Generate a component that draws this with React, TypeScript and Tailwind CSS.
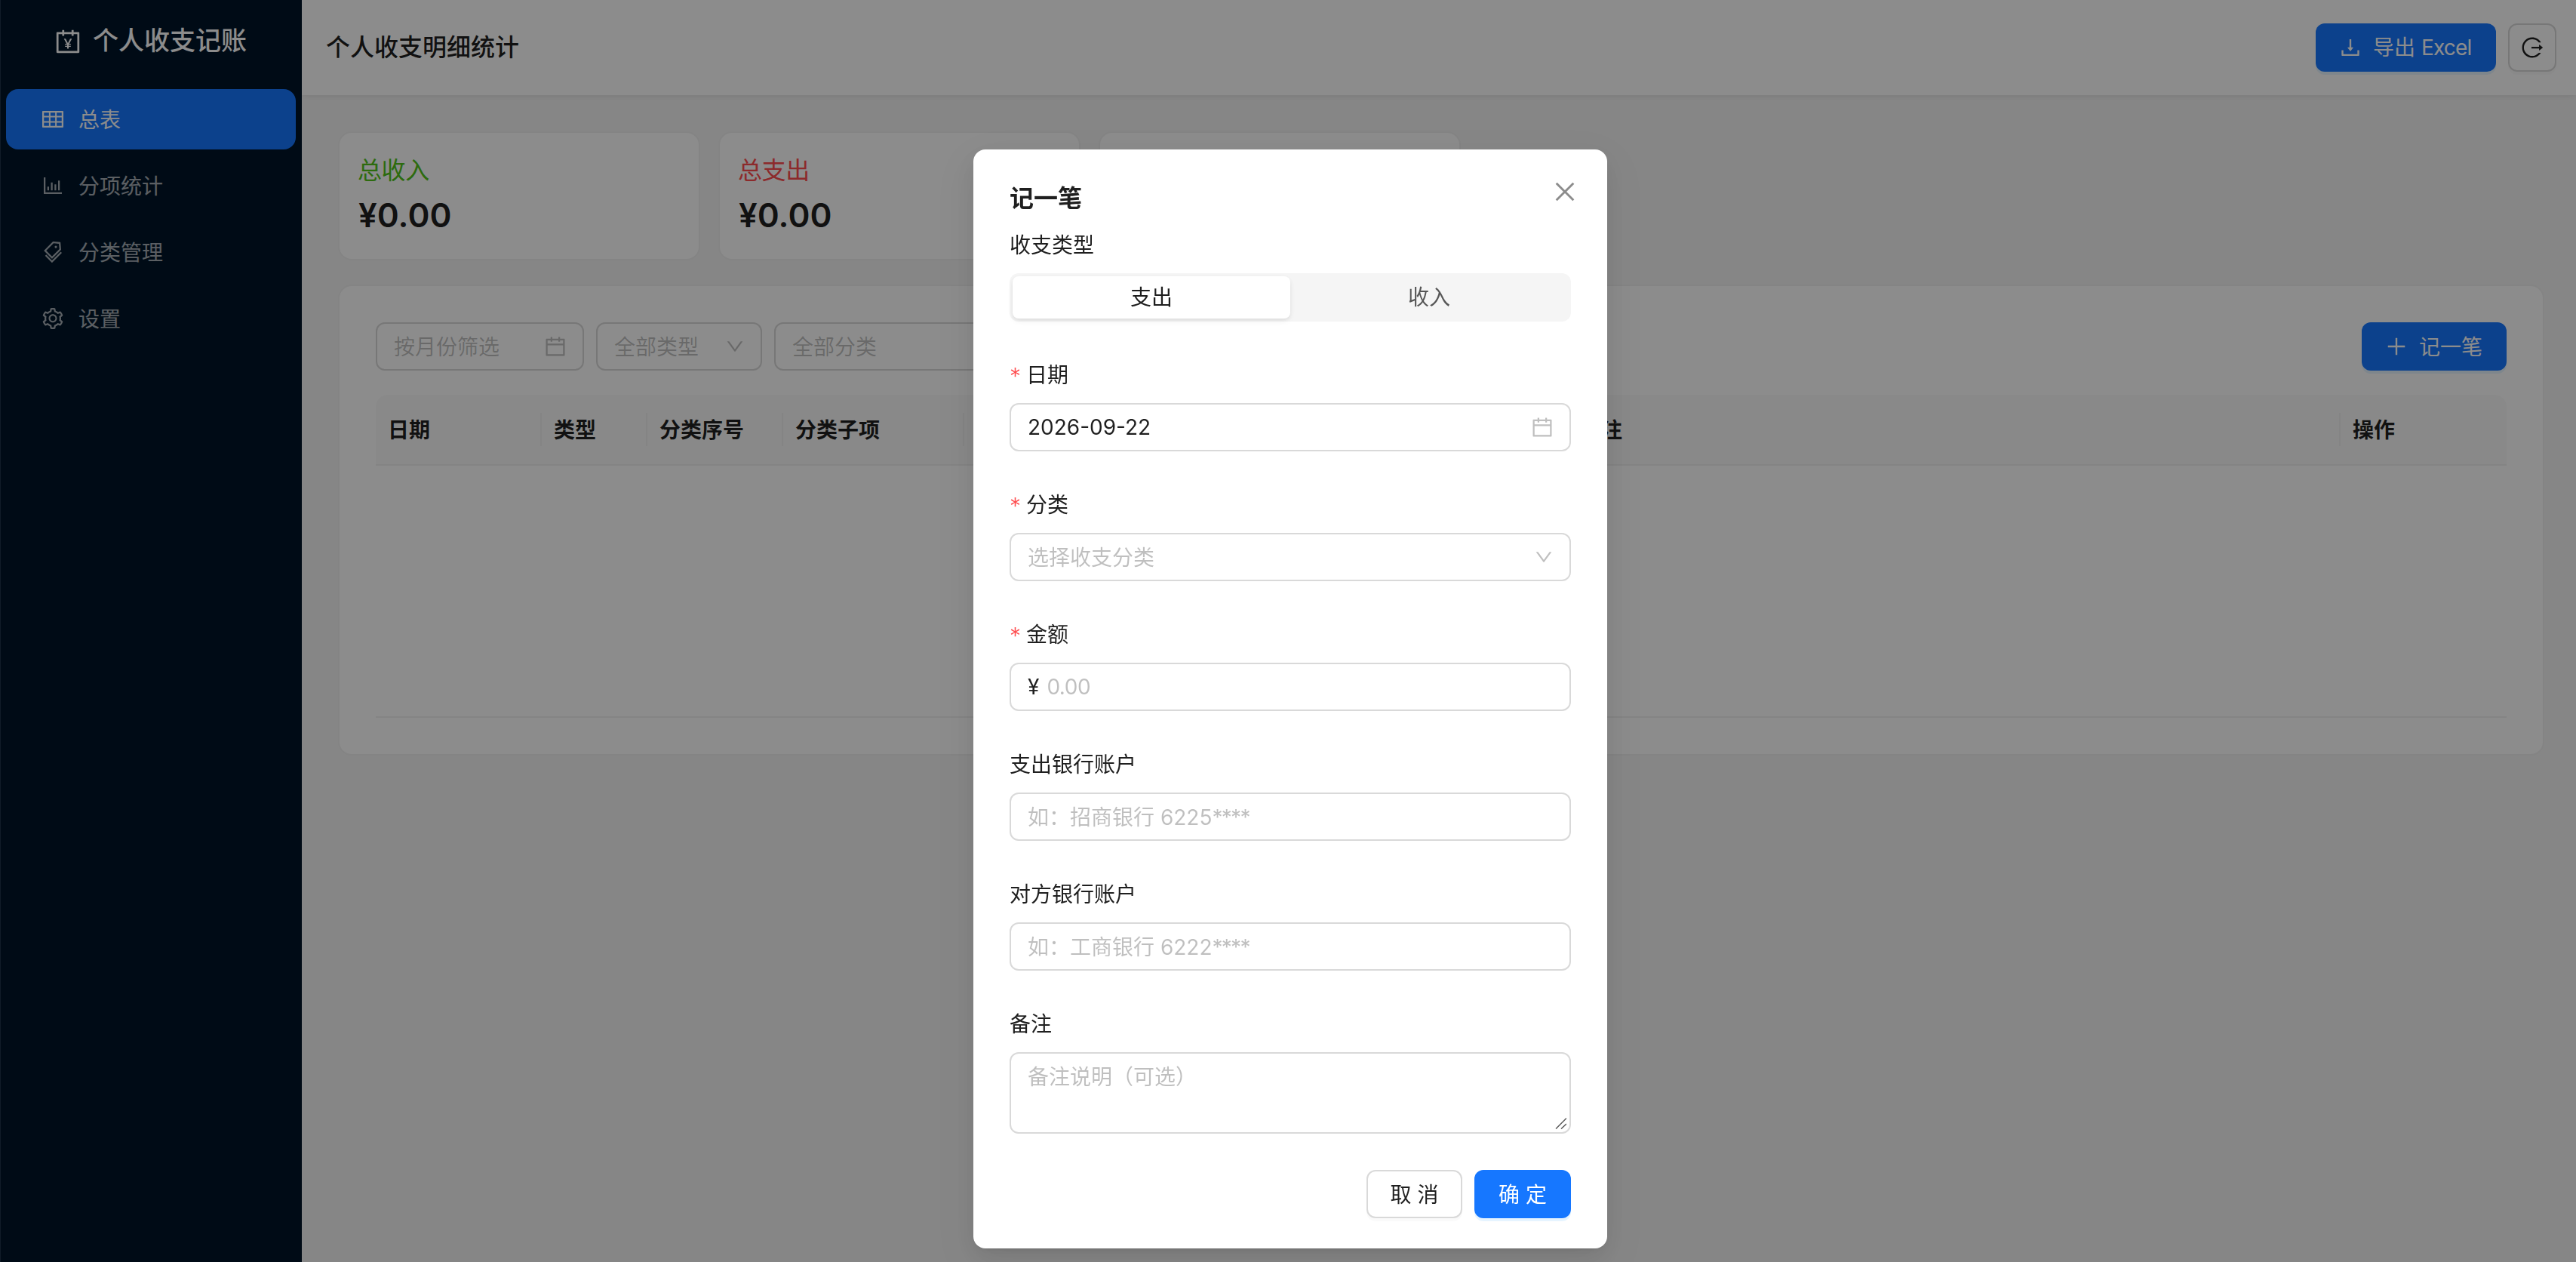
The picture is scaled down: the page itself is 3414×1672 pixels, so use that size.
import React from "react";
import clsx from "clsx";
import {
  AiOutlineAccountBook,
  AiOutlineBarChart,
  AiOutlineCalendar,
  AiOutlineClose,
  AiOutlineDown,
  AiOutlineDownload,
  AiOutlineLogout,
  AiOutlinePlus,
  AiOutlineSetting,
  AiOutlineTable,
  AiOutlineTags,
} from "react-icons/ai";

// Ant Design trims the 64 unit margin of the 1024 grid
const iconBox = "64 64 896 896";

const menuItems = [
  { key: "list", label: "总表", icon: AiOutlineTable },
  { key: "stats", label: "分项统计", icon: AiOutlineBarChart },
  { key: "categories", label: "分类管理", icon: AiOutlineTags },
  { key: "settings", label: "设置", icon: AiOutlineSetting },
];

const columns = [
  { title: "日期", width: "w-[220px]" },
  { title: "类型", width: "w-[140px]" },
  { title: "分类序号", width: "w-[180px]" },
  { title: "分类子项", width: "w-[240px]" },
  { title: "", width: "w-[800px]" },
  { title: "备注", width: "flex-1" },
  { title: "操作", width: "w-[220px]" },
];

const Sidebar = () => (
  <aside className="flex w-[400px] shrink-0 flex-col border-l border-[#1f3349] bg-[#001529]">
    <div className="flex h-[98px] items-center gap-4 pl-[72px] text-white">
      <AiOutlineAccountBook size={34} viewBox={iconBox} className="mt-3" />
      <span className="mt-2.5 text-[34px] font-medium leading-[52px]">个人收支记账</span>
    </div>
    <nav className="mt-5 flex flex-col gap-2 pl-[7px] pr-2">
      {menuItems.map(({ key, label, icon: Icon }) => (
        <div
          key={key}
          className={clsx(
            "flex h-20 items-center gap-5 rounded-2xl pl-12",
            key === "list" ? "bg-[#1677ff] text-white" : "text-white/65"
          )}
        >
          <Icon size={28} viewBox={iconBox} />
          <span className="pt-0.5">{label}</span>
        </div>
      ))}
    </nav>
  </aside>
);

const Header = () => (
  <header className="z-10 flex h-[126px] shrink-0 items-center bg-white pl-8 pr-[26px] shadow-[0_2px_8px_rgba(0,0,0,0.08)]">
    <h1 className="flex-1 text-[32px] font-medium leading-[48px]">个人收支明细统计</h1>
    <button className="mr-4 flex h-16 w-[239px] items-center gap-4 rounded-xl bg-[#1677ff] pl-8 text-white shadow-[0_4px_0_rgba(5,145,255,0.1)]">
      <AiOutlineDownload size={28} viewBox={iconBox} />
      <span className="whitespace-nowrap">
        导出 <span className="tracking-[-0.8px]">Excel</span>
      </span>
    </button>
    <button className="flex size-16 items-center justify-center rounded-xl border-2 border-[#d9d9d9] shadow-[0_4px_0_rgba(0,0,0,0.02)]">
      <AiOutlineLogout size={28} viewBox={iconBox} />
    </button>
  </header>
);

interface StatCardProps {
  label?: string;
  value?: string;
  color?: string;
}

const StatCard = ({ label, value, color }: StatCardProps) => (
  <div className="h-[167px] w-[476px] rounded-2xl bg-white px-6 pt-[25px] shadow-[0_0_0_2px_#f0f0f0]">
    <div className={clsx("text-[32px] leading-[50px] tracking-[-0.4px]", color)}>{label}</div>
    <div className="mt-1 pl-px text-[44px] font-semibold leading-[60px]">{value}</div>
  </div>
);

const Records = () => (
  <section className="h-[620px] rounded-2xl bg-white px-12 pt-12 shadow-[0_0_0_2px_#f0f0f0]">
    <div className="flex items-center gap-4">
      <div className="flex h-16 w-[276px] items-center justify-between rounded-xl border-2 border-[#d9d9d9] px-[22px] text-black/25">
        <span className="pt-0.5">按月份筛选</span>
        <AiOutlineCalendar size={28} viewBox={iconBox} />
      </div>
      <div className="flex h-16 w-[220px] items-center justify-between rounded-xl border-2 border-[#d9d9d9] px-[22px] text-black/25">
        <span className="pt-0.5">全部类型</span>
        <AiOutlineDown size={24} viewBox={iconBox} />
      </div>
      <div className="flex h-16 w-[320px] items-center rounded-xl border-2 border-[#d9d9d9] px-[22px] text-black/25">
        <span className="pt-0.5">全部分类</span>
      </div>
      <button className="ml-auto flex h-16 w-48 items-center gap-4 rounded-xl bg-[#1677ff] pl-8 text-white shadow-[0_4px_0_rgba(5,145,255,0.1)]">
        <AiOutlinePlus size={28} viewBox={iconBox} />
        <span className="pt-0.5">记一笔</span>
      </button>
    </div>
    <div className="mt-8 flex h-[94px] items-center rounded-t-2xl border-b-2 border-[#f0f0f0] bg-[#fafafa] font-semibold">
      {columns.map(({ title, width }, index) => (
        <div
          key={index}
          className={clsx(
            "flex h-11 items-center pl-4 pt-0.5",
            width,
            index < columns.length - 1 && "border-r-2 border-[#f0f0f0]"
          )}
        >
          {title}
        </div>
      ))}
    </div>
    <div className="h-[334px] border-b-2 border-[#f0f0f0]" />
  </section>
);

interface FieldProps {
  label: string;
  required?: boolean;
  children: React.ReactNode;
}

const Field = ({ label, required, children }: FieldProps) => (
  <div className="mb-12">
    <div className="mb-4 flex h-11 items-center pt-0.5">
      {required && <span className="w-[22px] pt-0.5 text-[30px] font-light text-[#ff4d4f]">*</span>}
      <span>{label}</span>
    </div>
    {children}
  </div>
);

const inputClass =
  "flex h-16 items-center rounded-xl border-2 border-[#d9d9d9] px-[22px]";

const RecordModal = () => (
  <div className="fixed inset-0 z-50 bg-black/45">
    <div className="ml-[1290px] mt-[198px] h-[1456px] w-[840px] rounded-2xl bg-white px-12 pt-10 shadow-[0_12px_32px_0_rgba(0,0,0,0.08),0_6px_12px_-8px_rgba(0,0,0,0.12),0_18px_56px_16px_rgba(0,0,0,0.05)]">
      <div className="flex h-12 items-start justify-between">
        <h2 className="pt-px text-[32px] font-semibold leading-[48px]">记一笔</h2>
        <AiOutlineClose size={32} viewBox={iconBox} className="-mr-2 text-black/45" />
      </div>
      <div className="mt-4 flex h-11 items-center pt-0.5">收支类型</div>
      <div className="mb-12 mt-4 flex h-16 rounded-xl bg-[#f5f5f5] p-1 text-center leading-[57px]">
        <div className="flex-1 rounded-lg bg-white shadow-[0_2px_4px_0_rgba(0,0,0,0.05),0_2px_12px_-2px_rgba(0,0,0,0.04),0_4px_8px_0_rgba(0,0,0,0.04)]">
          支出
        </div>
        <div className="flex-1 text-black/65">收入</div>
      </div>
      <Field label="日期" required>
        <div className={clsx(inputClass, "justify-between")}>
          <span>2026-09-22</span>
          <AiOutlineCalendar size={28} viewBox={iconBox} className="text-black/25" />
        </div>
      </Field>
      <Field label="分类" required>
        <div className={clsx(inputClass, "justify-between text-black/25")}>
          <span className="pt-0.5">选择收支分类</span>
          <AiOutlineDown size={24} viewBox={iconBox} />
        </div>
      </Field>
      <Field label="金额" required>
        <div className={clsx(inputClass, "gap-2.5")}>
          <span>¥</span>
          <span className="tracking-[-0.5px] text-black/25">0.00</span>
        </div>
      </Field>
      <Field label="支出银行账户">
        <div className={clsx(inputClass, "pt-0.5 text-black/25")}>
          <span>
            如：招商银行 6225<span className="tracking-[-1.7px]">****</span>
          </span>
        </div>
      </Field>
      <Field label="对方银行账户">
        <div className={clsx(inputClass, "pt-0.5 text-black/25")}>
          <span>
            如：工商银行 6222<span className="tracking-[-1.7px]">****</span>
          </span>
        </div>
      </Field>
      <Field label="备注">
        <div className="flex h-[108px] items-end justify-between rounded-xl border-2 border-[#d9d9d9] pl-[22px]">
          <span className="self-start pt-[9px] text-black/25">备注说明（可选）</span>
          <svg width="16" height="16" viewBox="0 0 16 16" className="mb-1 mr-1 text-black/65" stroke="currentColor" strokeWidth="1.5">
            <path d="M2 15.5L16 1.5M9 15.5L16 9" />
          </svg>
        </div>
      </Field>
      <div className="flex justify-end gap-4">
        <button className="h-16 w-[127px] rounded-xl border-2 border-[#d9d9d9] bg-white pt-0.5 shadow-[0_4px_0_rgba(0,0,0,0.02)]">
          取 消
        </button>
        <button className="h-16 w-32 rounded-xl bg-[#1677ff] pt-0.5 text-white shadow-[0_4px_0_rgba(5,145,255,0.1)]">
          确 定
        </button>
      </div>
    </div>
  </div>
);

const App = () => {
  return (
    <div className="flex h-screen w-screen overflow-hidden bg-[#f5f5f5] font-['Inter','Noto_Sans_CJK_SC',sans-serif] text-[28px] leading-[44px] text-black/88">
      <Sidebar />
      <div className="flex flex-1 flex-col">
        <Header />
        <main className="pl-[50px] pr-11 pt-[50px]">
          <div className="mb-9 flex gap-7">
            <StatCard label="总收入" value="¥0.00" color="text-[#52c41a]" />
            <StatCard label="总支出" value="¥0.00" color="text-[#ff4d4f]" />
            <StatCard />
          </div>
          <Records />
        </main>
      </div>
      <RecordModal />
    </div>
  );
};

export default App;
